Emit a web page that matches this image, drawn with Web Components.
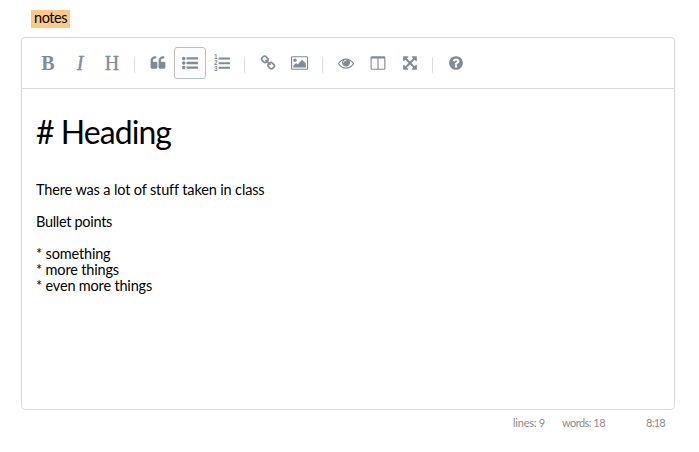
<!DOCTYPE html>
<html lang="en">
<head>
<meta charset="utf-8">
<title>notes</title>
<style>
html,body{margin:0;background:#fff}
body{height:452px;overflow:hidden}
</style>
</head>
<body>
<notes-page></notes-page>
<script>
const ICONS = {
  quote: ['0 0 1792 1792', 'M832 960v384q0 80-56 136t-136 56h-384q-80 0-136-56t-56-136v-704q0-104 40.5-198.5t109.5-163.5 163.5-109.5 198.5-40.5h64q26 0 45 19t19 45v128q0 26-19 45t-45 19h-64q-106 0-181 75t-75 181v32q0 40 28 68t68 28h224q80 0 136 56t56 136zm896 0v384q0 80-56 136t-136 56h-384q-80 0-136-56t-56-136v-704q0-104 40.5-198.5t109.5-163.5 163.5-109.5 198.5-40.5h64q26 0 45 19t19 45v128q0 26-19 45t-45 19h-64q-106 0-181 75t-75 181v32q0 40 28 68t68 28h224q80 0 136 56t56 136z'],
  ul: ['0 0 1792 1792', 'M384 1408q0 80-56 136t-136 56-136-56-56-136 56-136 136-56 136 56 56 136zm0-512q0 80-56 136t-136 56-136-56-56-136 56-136 136-56 136 56 56 136zm1408 416v192q0 13-9.5 22.5t-22.5 9.5h-1216q-13 0-22.5-9.5t-9.5-22.5v-192q0-13 9.5-22.5t22.5-9.5h1216q13 0 22.5 9.5t9.5 22.5zm-1408-928q0 80-56 136t-136 56-136-56-56-136 56-136 136-56 136 56 56 136zm1408 416v192q0 13-9.5 22.5t-22.5 9.5h-1216q-13 0-22.5-9.5t-9.5-22.5v-192q0-13 9.5-22.5t22.5-9.5h1216q13 0 22.5 9.5t9.5 22.5zm0-512v192q0 13-9.5 22.5t-22.5 9.5h-1216q-13 0-22.5-9.5t-9.5-22.5v-192q0-13 9.5-22.5t22.5-9.5h1216q13 0 22.5 9.5t9.5 22.5z'],
  link: ['0 0 1792 1792', 'M1520 1216q0-40-28-68l-208-208q-28-28-68-28-42 0-72 32 3 3 19 18.5t21.5 21.5 15 19 13 25.5 3.5 27.5q0 40-28 68t-68 28q-15 0-27.5-3.5t-25.5-13-19-15-21.5-21.5-18.5-19q-33 31-33 73 0 40 28 68l206 207q27 27 68 27 40 0 68-26l147-146q28-28 28-67zm-703-705q0-40-28-68l-206-207q-28-28-68-28-39 0-68 27l-147 146q-28 28-28 67 0 40 28 68l208 208q27 27 68 27 42 0 72-31-3-3-19-18.5t-21.5-21.5-15-19-13-25.5-3.5-27.5q0-40 28-68t68-28q15 0 27.5 3.5t25.5 13 19 15 21.5 21.5 18.5 19q33-31 33-73zm895 705q0 120-85 203l-147 146q-83 83-203 83-121 0-204-85l-206-207q-83-83-83-203 0-123 88-209l-88-88q-86 88-208 88-120 0-204-84l-208-208q-84-84-84-204t85-203l147-146q83-83 203-83 121 0 204 85l206 207q83 83 83 203 0 123-88 209l88 88q86-88 208-88 120 0 204 84l208 208q84 84 84 204z'],
  image: ['0 0 1920 1792', 'M640 576q0 80-56 136t-136 56-136-56-56-136 56-136 136-56 136 56 56 136zm1024 384v448h-1408v-192l320-320 160 160 512-512zm96-704h-1600q-13 0-22.5 9.5t-9.5 22.5v1216q0 13 9.5 22.5t22.5 9.5h1600q13 0 22.5-9.5t9.5-22.5v-1216q0-13-9.5-22.5t-22.5-9.5zm160 32v1216q0 66-47 113t-113 47h-1600q-66 0-113-47t-47-113v-1216q0-66 47-113t113-47h1600q66 0 113 47t47 113z'],
  eye: ['0 0 1792 1792', 'M1664 960q-152-236-381-353 61 104 61 225 0 185-131.5 316.5t-316.5 131.5-316.5-131.5-131.5-316.5q0-121 61-225-229 117-381 353 133 205 333.5 326.5t434.5 121.5 434.5-121.5 333.5-326.5zm-720-384q0-20-14-34t-34-14q-125 0-214.5 89.5t-89.5 214.5q0 20 14 34t34 14 34-14 14-34q0-86 61-147t147-61q20 0 34-14t14-34zm848 384q0 34-20 69-140 230-376.5 368.5t-499.5 138.5-499.5-139-376.5-368q-20-35-20-69t20-69q140-229 376.5-368t499.5-139 499.5 139 376.5 368q20 35 20 69z'],
  columns: ['0 0 1792 1792', 'M224 1536h608v-1152h-640v1120q0 13 9.5 22.5t22.5 9.5zm1376-32v-1120h-640v1152h608q13 0 22.5-9.5t9.5-22.5zm128-1216v1216q0 66-47 113t-113 47h-1344q-66 0-113-47t-47-113v-1216q0-66 47-113t113-47h1344q66 0 113 47t47 113z'],
  expand: ['0 0 1792 1792', 'M1411 541l-355 355 355 355 144-144q29-31 70-14 39 17 39 59v448q0 26-19 45t-45 19h-448q-42 0-59-40-17-39 14-69l144-144-355-355-355 355 144 144q31 30 14 69-17 40-59 40h-448q-26 0-45-19t-19-45v-448q0-42 40-59 39-17 69 14l144 144 355-355-355-355-144 144q-19 19-45 19-12 0-24-5-40-17-40-59v-448q0-26 19-45t45-19h448q42 0 59 40 17 39-14 69l-144 144 355 355 355-355-144-144q-31-30-14-69 17-40 59-40h448q26 0 45 19t19 45v448q0 42-39 59-13 5-25 5-26 0-45-19z'],
  help: ['0 0 1792 1792', 'M1024 1376v-192q0-14-9-23t-23-9h-192q-14 0-23 9t-9 23v192q0 14 9 23t23 9h192q14 0 23-9t9-23zm256-672q0-88-55.5-163t-138.5-116-170-41q-243 0-371 213-15 24 8 42l132 100q7 6 19 6 16 0 25-12 53-68 86-92 34-24 86-24 48 0 85.5 26t37.5 59q0 38-20 61t-68 45q-63 28-115.5 86.5t-52.5 125.5v36q0 14 9 23t23 9h192q14 0 23-9t9-23q0-19 21.5-49.5t54.5-49.5q32-18 49-28.5t46-35 44.5-48 28-60.5 12.5-81zm384 192q0 209-103 385.5t-279.5 279.5-385.5 103-385.5-103-279.5-279.5-103-385.5 103-385.5 279.5-279.5 385.5-103 385.5 103 279.5 279.5 103 385.5z'],
  ol: ['0 0 1792 1792', 'M544 288h1216q32 0 32 32v160q0 32-32 32h-1216q-32 0-32-32v-160q0-32 32-32zm0 512h1216q32 0 32 32v160q0 32-32 32h-1216q-32 0-32-32v-160q0-32 32-32zm0 512h1216q32 0 32 32v160q0 32-32 32h-1216q-32 0-32-32v-160q0-32 32-32z',
    '<g fill="currentColor" font-family="Liberation Sans,sans-serif" font-weight="700" font-size="720"><text x="0" y="500">1</text><text x="0" y="1140">2</text><text x="0" y="1780">3</text></g>']
};
function define(name, html, setup) {
  customElements.define(name, class extends HTMLElement {
    constructor() {
      super();
      this.attachShadow({mode: 'open'}).innerHTML = html;
    }
    connectedCallback() { if (setup) setup(this, this.shadowRoot); }
  });
}
/* One line of text whose tracking is set so that it spans its width attribute. */
define('text-line', `<style>
:host{display:block;white-space:pre}
span{display:inline-block}
</style><span><slot></slot></span>`, (el, root) => {
  const span = root.querySelector('span');
  const want = parseFloat(el.getAttribute('width'));
  const gap = (want - span.getBoundingClientRect().width) / el.textContent.length;
  span.style.letterSpacing = gap.toFixed(3) + 'px';
});
define('tool-button', `<style>
:host{display:flex;box-sizing:border-box;width:32px;height:32px;align-items:center;justify-content:center;border:1px solid transparent;border-radius:3px;color:#7f8c98;font:20px/32px "Liberation Serif",serif}
:host([active]){border-color:#b4c3c2;background:#fcfcfc}
:host([face=bold]){font-weight:700}
:host([face=italic]){font-style:italic;-webkit-text-stroke:.4px}
:host([face=plain]){-webkit-text-stroke:.3px}
svg{display:block;height:16px;overflow:visible}
</style><slot></slot>`, (el, root) => {
  const icon = ICONS[el.getAttribute('icon')];
  if (!icon) return;
  const width = icon[0].includes('1920') ? 17.14 : 16;
  root.querySelector('slot').innerHTML =
    `<svg width="${width}" viewBox="${icon[0]}"><path fill="currentColor" d="${icon[1]}"/>${icon[2] || ''}</svg>`;
});
define('tool-separator', `<style>
:host{display:block;width:1px;height:16px;margin:3px 7px 0 6px;background:#dcdcdc}
</style>`);
define('editor-toolbar', `<style>
:host{display:flex;align-items:center;box-sizing:border-box;height:51px;padding:0 10px;border-bottom:1px solid #d5d7d8}
</style><slot></slot>`);
define('status-bar', `<style>
:host{display:flex;justify-content:flex-end;padding:6px 10px 0 0;font-size:11px;line-height:14px;color:#8c8c8c}
::slotted(:nth-child(2)){margin-left:17px}
::slotted(:nth-child(3)){margin-left:41px}
</style><slot></slot>`);
define('notes-page', `<style>
:host{display:block;padding:10px 24px 0 21px;color:#000;font-family:Lato,sans-serif}
.tag{width:39px;height:18px;box-sizing:border-box;margin-left:10px;padding-left:3px;background:#fbcb84;font-size:14.5px;line-height:16px}
.frame{box-sizing:border-box;height:373px;margin-top:9px;border:1px solid #d5d7d8;border-radius:4px}
.body{padding:23px 14px;font-size:14.5px;line-height:16px}
.h{font-size:32px;line-height:40px;margin-bottom:30px}
.p{margin-bottom:16px}
</style>
<div class="tag"><text-line width="33">notes</text-line></div>
<div class="frame">
<editor-toolbar>
<tool-button face="bold">B</tool-button><tool-button face="italic">I</tool-button><tool-button face="plain">H</tool-button>
<tool-separator></tool-separator>
<tool-button icon="quote"></tool-button><tool-button icon="ul" active></tool-button><tool-button icon="ol"></tool-button>
<tool-separator></tool-separator>
<tool-button icon="link"></tool-button><tool-button icon="image"></tool-button>
<tool-separator></tool-separator>
<tool-button icon="eye"></tool-button><tool-button icon="columns"></tool-button><tool-button icon="expand"></tool-button>
<tool-separator></tool-separator>
<tool-button icon="help"></tool-button>
</editor-toolbar>
<div class="body">
<text-line class="h" width="135"># Heading</text-line>
<text-line class="p" width="228">There was a lot of stuff taken in class</text-line>
<text-line class="p" width="76">Bullet points</text-line>
<text-line width="74.5">* something</text-line>
<text-line width="83">* more things</text-line>
<text-line width="116">* even more things</text-line>
</div>
</div>
<status-bar><text-line width="32">lines: 9</text-line><text-line width="43">words: 18</text-line><text-line width="19">8:18</text-line></status-bar>`);
</script>
</body>
</html>
